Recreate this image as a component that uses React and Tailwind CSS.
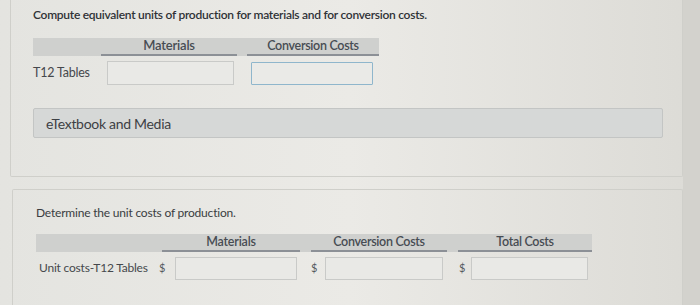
export default function App() {
  const font = { fontFamily: 'Lato, "Open Sans", "Liberation Sans", sans-serif' };
  return (
    <div style={font} className="w-[700px] h-[305px] overflow-hidden bg-gradient-to-r from-[#e4e4e0] via-[#ebeae6] to-[#dcdbd6] flex text-[#3b3d40]">
      <div className="w-[683px] pl-[10px] flex flex-col">
        {/* Panel 1 */}
        <div className="h-[177px] border border-t-0 border-[#cfcfca] rounded-b-[2px] pl-[22px] pt-[8px] pr-[19px] flex flex-col">
          <div className="text-[12px] leading-[14px] font-semibold text-[#2f3236] tracking-[-0.27px]">
            Compute equivalent units of production for materials and for conversion costs.
          </div>
          <div className="mt-[16px] w-[346px]">
            <div className="h-[18px] bg-[#cfd0ce] flex items-end">
              <div className="w-[68px]" />
              <div className="w-[136px] h-full border-b-[2px] border-[#8c9096] flex items-center justify-center text-[13px] font-semibold text-[#474c53] tracking-[-0.2px]">Materials</div>
              <div className="w-[10px]" />
              <div className="w-[132px] h-full border-b-[2px] border-[#8c9096] flex items-center justify-center text-[12.5px] font-semibold text-[#474c53] tracking-[-0.3px]">Conversion Costs</div>
            </div>
            <div className="flex items-center mt-[5px] h-[24px]">
              <div className="w-[74px] text-[12.5px] text-[#45484c] tracking-[-0.2px]">T12 Tables</div>
              <div className="w-[127px] h-[24px] border border-[#c9cac8] bg-[#e9e9e6]" />
              <div className="w-[17px]" />
              <div className="w-[122px] h-[23px] border-[1.5px] border-[#8fb6cc] bg-[#eaeae7] rounded-[1px]" />
            </div>
          </div>
          <div className="mt-[23px] h-[30px] w-[630px] bg-[#d6d8d7] border border-[#c3c5c4] rounded-[2px] flex items-center pl-[12px] text-[14px] text-[#3d4044] tracking-[-0.3px]">
            eTextbook and Media
          </div>
        </div>
        {/* Panel 2 */}
        <div className="mt-[12px] ml-[2px] flex-1 border border-b-0 border-[#cfcfca] rounded-t-[2px] pl-[23px] pt-[16px]">
          <div className="text-[12px] leading-[14px] text-[#3a3d41] tracking-[-0.2px]">
            Determine the unit costs of production.
          </div>
          <div className="mt-[14px] w-[556px]">
            <div className="h-[18px] bg-[#cfd0ce] flex items-end">
              <div className="w-[126px]" />
              <div className="w-[138px] h-full border-b-[2px] border-[#8c9096] flex items-center justify-center text-[12.5px] font-semibold text-[#474c53] tracking-[-0.2px]">Materials</div>
              <div className="w-[11px]" />
              <div className="w-[136px] h-full border-b-[2px] border-[#8c9096] flex items-center justify-center text-[12.5px] font-semibold text-[#474c53] tracking-[-0.3px]">Conversion Costs</div>
              <div className="w-[11px]" />
              <div className="w-[134px] h-full border-b-[2px] border-[#8c9096] flex items-center justify-center text-[12.5px] font-semibold text-[#474c53] tracking-[-0.3px]">Total Costs</div>
            </div>
            <div className="flex items-center mt-[4px] h-[24px]">
              <div className="w-[123px] pl-[3px] text-[12px] text-[#45484c] tracking-[-0.2px] whitespace-nowrap">Unit costs-T12 Tables</div>
              <div className="w-[16px] text-[11px] text-[#55595e]">$</div>
              <div className="w-[122px] h-[23px] border border-[#c9cac8] bg-[#e9e9e6]" />
              <div className="w-[14px]" />
              <div className="w-[14px] text-[11px] text-[#55595e]">$</div>
              <div className="w-[118px] h-[23px] border border-[#c9cac8] bg-[#e9e9e6]" />
              <div className="w-[16px]" />
              <div className="w-[12px] text-[11px] text-[#55595e]">$</div>
              <div className="w-[117px] h-[23px] border border-[#c9cac8] bg-[#e9e9e6]" />
            </div>
          </div>
        </div>
      </div>
      <div className="flex-1 bg-[#d3d2cd]" />
    </div>
  );
}
